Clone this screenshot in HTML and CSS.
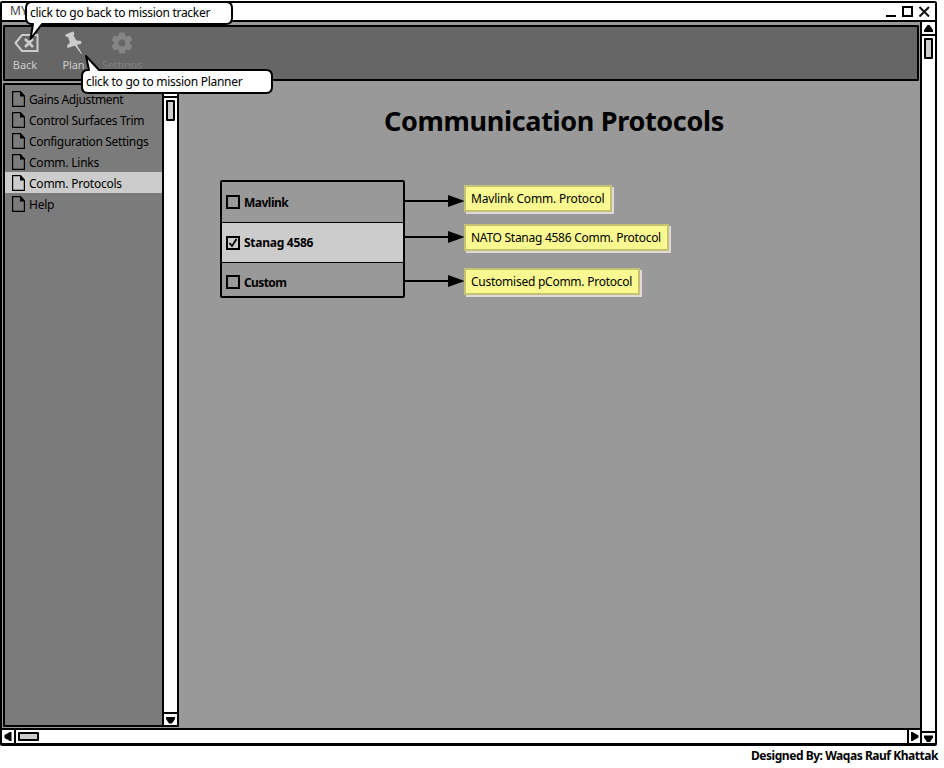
FILE: index.html
```html
<!DOCTYPE html>
<html lang="en">
<head>
<meta charset="utf-8">
<title>Communication Protocols</title>
<link rel="stylesheet" href="styles.css">
</head>
<body>
<div class="window">
  <header class="titlebar">
    <span class="title">MY</span>
    <svg class="controls" width="48" height="17" viewBox="0 0 48 17"><path d="M1 13h10" stroke="#000" stroke-width="2"/><path d="M18 4h9v9h-9z" fill="none" stroke="#000" stroke-width="2"/><path d="M34.500 4l9.500 9.500M44 4l-9.500 9.500" stroke="#111" stroke-width="2"/></svg>
  </header>
  <div class="body">
    <div class="view">
      <nav class="toolbar">
        <div class="tool back"><svg width="26" height="24" viewBox="0 0 26 24"><path d="M2.500 12L9 4h15.500v16H9z" fill="none" stroke="#ccc" stroke-width="2"/><path d="M12 8l8 8M20 8l-8 8" stroke="#ccc" stroke-width="2.500"/></svg><span>Back</span></div>
        <div class="tool plan"><svg width="26" height="24" viewBox="0 0 26 24"><path d="M4.500 3.500L12 0.500L13.500 2.500L12.500 4.500L15.500 9.500L20 10L20.500 12.500L6.500 17L6 14.500L9 11.500L7 6L4.500 5.500z" fill="#ccc"/><path d="M13.500 14l2-.7L21 22.500l-.8.5z" fill="#ccc"/></svg><span>Plan</span></div>
        <div class="tool settings"><svg width="26" height="24" viewBox="0 0 26 24"><g fill="#858585"><circle cx="13" cy="12" r="8"/><path id="tooth" d="M10.300 1.500h5.400l.8 4h-7z"/><use href="#tooth" transform="rotate(60 13 12)"/><use href="#tooth" transform="rotate(120 13 12)"/><use href="#tooth" transform="rotate(180 13 12)"/><use href="#tooth" transform="rotate(240 13 12)"/><use href="#tooth" transform="rotate(300 13 12)"/></g><circle cx="13" cy="12" r="3.500" fill="#666"/></svg><span>Settings</span></div>
      </nav>
      <div class="panes">
        <aside class="sidebar">
          <ul class="tree">
            <li><svg class="file" width="13" height="16"><use href="#file"/></svg><span class="t1">Gains Adjustment</span></li>
            <li><svg class="file" width="13" height="16"><use href="#file"/></svg><span class="t2">Control Surfaces Trim</span></li>
            <li><svg class="file" width="13" height="16"><use href="#file"/></svg><span class="t3">Configuration Settings</span></li>
            <li><svg class="file" width="13" height="16"><use href="#file"/></svg><span class="t4">Comm. Links</span></li>
            <li class="selected"><svg class="file" width="13" height="16"><use href="#file"/></svg><span class="t5">Comm. Protocols</span></li>
            <li><svg class="file" width="13" height="16"><use href="#file"/></svg><span class="t6">Help</span></li>
          </ul>
          <div class="vscroll">
            <div class="cap top"></div>
            <div class="track"><div class="thumb"></div></div>
            <div class="cap bottom"><svg width="11" height="10"><path d="M1 2h9v2L7 8.500H4L1 4z"/></svg></div>
          </div>
        </aside>
        <main class="content">
          <h1>Communication Protocols</h1>
          <div class="diagram">
            <ul class="list">
              <li><i class="box"></i><span class="l1">Mavlink</span></li>
              <li class="on"><i class="box"><svg width="10" height="10"><path d="M1.500 5L4 8L8.500 1" fill="none" stroke="#000" stroke-width="1.800"/></svg></i><span class="l2">Stanag 4586</span></li>
              <li><i class="box"></i><span class="l3">Custom</span></li>
            </ul>
            <svg class="links" width="59" height="118"><path d="M0 21h44M0 57h44M0 101h44" stroke="#000" stroke-width="2"/><path d="M43 15l17 6l-17 6zM43 51l17 6l-17 6zM43 95l17 6l-17 6z"/></svg>
            <div class="notes">
              <div class="note n1"><span>Mavlink Comm. Protocol</span></div>
              <div class="note n2"><span>NATO Stanag 4586 Comm. Protocol</span></div>
              <div class="note n3"><span>Customised pComm. Protocol</span></div>
            </div>
          </div>
        </main>
      </div>
    </div>
    <div class="hscroll">
      <div class="cap"><svg width="12" height="13"><path d="M9.500 2v9H8L2.500 8V5L8 2z"/></svg></div>
      <div class="htrack"><div class="thumb"></div></div>
      <div class="cap right"><svg width="11" height="13"><path d="M2 2h1.500l6 3.500v2L3.500 11H2z"/></svg></div>
    </div>
  </div>
  <div class="vscroll outer">
    <div class="cap top"><svg width="11" height="11"><path d="M1 9V7l3.500-5h2L10 7v2z"/></svg></div>
    <div class="track"><div class="thumb"></div></div>
    <div class="cap bottom"><svg width="11" height="9"><path d="M1 1.500h9v2L7 8H4L1 3.500z"/></svg></div>
  </div>
</div>
<footer><span>Designed By: Waqas Rauf Khattak</span></footer>

<div class="callout c1"><svg width="209" height="41" viewBox="0 0 209 41"><path d="M7 1H201Q207 1 207 7V17Q207 23 201 23H17L5.500 38L8 23H7Q1 23 1 17V7Q1 1 7 1z"/></svg><span>click to go back to mission tracker</span></div>
<div class="callout c2"><svg width="193" height="42" viewBox="0 0 193 42"><path d="M8 17L5 3L18 17H185Q191 17 191 23V34Q191 40 185 40H7Q1 40 1 34V23Q1 17 7 17z"/></svg><span>click to go to mission Planner</span></div>

<svg width="0" height="0" class="defs"><defs><g id="file"><path d="M.6.6H8.500L12.400 5V15.400H.6z" fill="none" stroke="#000" stroke-width="1.200"/><path d="M8 0L13 5.500H8z"/></g></defs></svg>
</body>
</html>
```
FILE: styles.css
```css
* { box-sizing: border-box; }
body { margin: 0; width: 944px; height: 768px; overflow: hidden; background: #fff; color: #000; font: 12px/16px "Noto Sans", "Open Sans", sans-serif; position: relative; display: flow-root; }
ul { margin: 0; padding: 0; list-style: none; }
svg { display: block; flex: none; }
span { white-space: nowrap; }

.window { margin-top: 1px; width: 937px; height: 745px; border: 2px solid #000; border-bottom-width: 3px; border-radius: 2px; display: grid; grid-template: 19px 1fr / 1fr 15px; background: #fff; }
.titlebar { grid-column: 1 / 3; border-bottom: 2px solid #000; display: flex; justify-content: space-between; padding: 0 2px 0 8px; color: #444; }
.body { display: flex; flex-direction: column; min-width: 0; }
.view { flex: 1; background: #999; padding: 3px 1px 1px; display: flex; flex-direction: column; gap: 2px; }

.toolbar { height: 56px; border: 2px solid #000; border-radius: 1px; background: #666; display: flex; color: #ccc; font-size: 11px; }
.tool { width: 49px; display: flex; flex-direction: column; align-items: center; padding-top: 4px; gap: 2px; }
.back { width: 42px; }
.back span { margin-right: 2px; }
.plan { width: 56px; }
.plan svg { margin-left: -2px; }
.plan span { margin-right: 3px; letter-spacing: -.1px; }
.settings { width: 38px; color: #808080; }
.settings span { letter-spacing: -.2px; }

.panes { flex: 1; display: flex; }
.sidebar { width: 176px; border: 2px solid #000; border-radius: 1px; background: #7b7b7b; display: flex; }
.tree { flex: 1; padding-top: 3px; }
.tree li { height: 21px; display: flex; align-items: center; gap: 4px; padding: 1px 0 0 7px; }
.tree span { padding-top: 1px; }
.tree .selected { background: #ccc; }
.t1 { letter-spacing: -.38px; }
.t2 { letter-spacing: -.29px; }
.t3 { letter-spacing: -.33px; }
.t4, .t5 { letter-spacing: -.23px; }
.t6 { letter-spacing: -.25px; }

.vscroll { width: 15px; border-left: 2px solid #000; background: #fff; display: flex; flex-direction: column; }
.vscroll .cap { height: 13px; padding: 1px; }
.vscroll .top { border-bottom: 2px solid #000; }
.vscroll .bottom { border-top: 2px solid #000; }
.track { flex: 1; padding: 2px; }
.track .thumb { width: 9px; height: 21px; }
.thumb { background: #ccc; border: 2px solid #000; border-radius: 1px; }
.outer .top { height: 14px; }
.outer .bottom { height: 12px; }

.hscroll { height: 15px; border-top: 2px solid #000; background: #fff; display: flex; }
.hscroll .cap { width: 14px; border-right: 2px solid #000; }
.hscroll .cap.right { width: 13px; border-right: 0; border-left: 2px solid #000; }
.htrack { flex: 1; padding: 2px; }
.htrack .thumb { width: 21px; height: 9px; }

.content { flex: 1; padding-left: 41px; }
h1 { margin: 20px 0 0 164px; font-size: 27px; line-height: 36px; font-weight: bold; white-space: nowrap; letter-spacing: -.33px; }
.diagram { margin-top: 41px; display: flex; }
.list { width: 185px; height: 118px; border: 2px solid #000; border-radius: 2px; font-weight: bold; }
.list li { height: 40px; display: flex; align-items: center; gap: 4px; padding-left: 4px; }
.list li + li { border-top: 1px solid #000; }
.list li:last-child { height: 34px; padding-top: 5px; }
.list li:first-child span, .list li:last-child span { padding-top: 2px; }
.on { background: #ccc; }
.box { width: 14px; height: 14px; border: 2px solid #000; }
.l1 { letter-spacing: -.5px; }
.l2 { letter-spacing: -.27px; }
.l3 { letter-spacing: -.6px; }
.notes { padding-top: 5px; display: flex; flex-direction: column; align-items: flex-start; gap: 12px; }
.note { height: 27px; border: 2px solid #c5c271; background: #f9f891; box-shadow: 2px 2px 0 #e1d9d9; padding: 4px 0 0 5px; }
.n1 { width: 148px; letter-spacing: -.18px; }
.n2 { width: 205px; letter-spacing: -.27px; }
.n3 { width: 176px; margin-top: 5px; letter-spacing: -.25px; }

footer { width: 938px; margin-top: 2px; display: flex; justify-content: flex-end; font-weight: bold; letter-spacing: -.46px; }
.callout { position: absolute; }
.callout path { fill: #fff; stroke: #000; stroke-width: 2; stroke-linejoin: round; }
.callout span { position: absolute; left: 5px; }
.c1 { left: 25px; top: 1px; letter-spacing: -.29px; }
.c1 span { top: 4px; }
.c2 { left: 81px; top: 53px; letter-spacing: -.28px; }
.c2 span { top: 21px; }
.defs { position: absolute; }
```
